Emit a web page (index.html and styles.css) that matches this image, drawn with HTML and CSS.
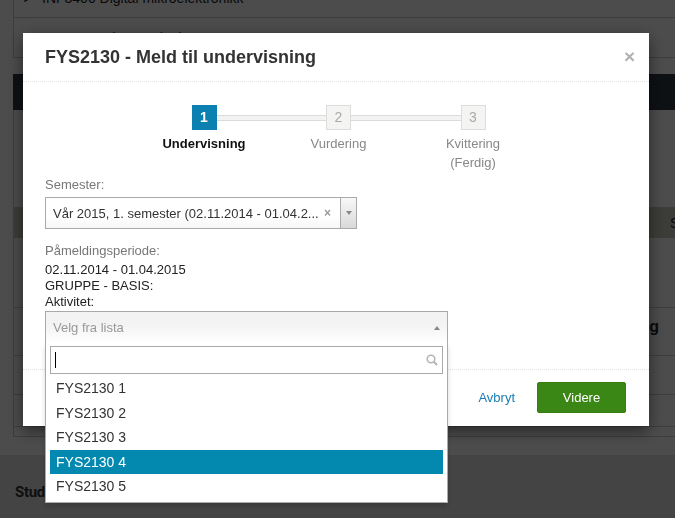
FILE: index.html
```html
<!DOCTYPE html>
<html lang="no">

<head>
    <meta charset="UTF-8">
    <meta name="viewport" content="width=device-width, initial-scale=1.0">
    <title>FYS2130 - Meld til undervisning</title>
    <link rel="stylesheet" href="styles.css">
</head>

<body>
    <div class="page">
        <div class="courses">
            <div class="course-row">
                <svg class="pencil" width="10" height="10" viewBox="0 0 10 10"><path d="M1 9 L2 6 L7 1 L9 3 L4 8 Z" fill="#333"/></svg>
                <span>INF3400 Digital mikroelektronikk</span>
            </div>
            <div class="course-row">
                <svg class="pencil" width="10" height="10" viewBox="0 0 10 10"><path d="M1 9 L2 6 L7 1 L9 3 L4 8 Z" fill="#333"/></svg>
                <span>MAT1120 Lineær algebra</span>
            </div>
        </div>
        <div class="navbar"></div>
        <div class="panel">
            <div class="tbl-head"><span>Emne</span><span>Semester</span></div>
            <div class="tbl-row row-a"></div>
            <div class="tbl-row row-b">Undervisning og</div>
            <div class="tbl-row row-c"></div>
            <div class="tbl-row row-d"></div>
        </div>
        <div class="footer"><span class="footer-title">Studentweb</span></div>
    </div>

    <div class="backdrop"></div>

    <div class="modal">
        <div class="modal-header">
            <h3>FYS2130 - Meld til undervisning</h3>
            <span class="close">×</span>
        </div>
        <div class="modal-body">
            <div class="steps">
                <div class="step active">
                    <span class="step-num">1</span>
                    <span class="step-label">Undervisning</span>
                </div>
                <div class="step">
                    <span class="step-num">2</span>
                    <span class="step-label">Vurdering</span>
                </div>
                <div class="step">
                    <span class="step-num">3</span>
                    <span class="step-label">Kvittering<br>(Ferdig)</span>
                </div>
            </div>

            <div class="field-label">Semester:</div>
            <div class="select">
                <span class="select-text">Vår 2015, 1. semester (02.11.2014 - 01.04.2...</span>
                <span class="select-clear">×</span>
                <span class="select-arrow"><i class="tri-down"></i></span>
            </div>

            <div class="field-label period">Påmeldingsperiode:</div>
            <div class="info">
                02.11.2014 - 01.04.2015<br>
                GRUPPE - BASIS:<br>
                Aktivitet:
            </div>

            <div class="select2">
                <span class="placeholder">Velg fra lista</span>
                <i class="tri-up"></i>
                <div class="dropdown">
                    <div class="search">
                        <span class="caret"></span>
                        <svg class="search-icon" width="12" height="12" viewBox="0 0 12 12"><circle cx="5" cy="5" r="3.8" fill="none" stroke="#b5b5b5" stroke-width="1.6"/><path d="M7.8 7.8 L11 11" stroke="#b5b5b5" stroke-width="2"/></svg>
                    </div>
                    <ul class="results">
                        <li>FYS2130 1</li>
                        <li>FYS2130 2</li>
                        <li>FYS2130 3</li>
                        <li class="highlighted">FYS2130 4</li>
                        <li>FYS2130 5</li>
                    </ul>
                </div>
            </div>
        </div>
        <div class="modal-footer">
            <a class="cancel">Avbryt</a>
            <button class="btn-next">Videre</button>
        </div>
    </div>
</body>

</html>
```

FILE: styles.css
```css
* {
    box-sizing: border-box;
}

html,
body {
    margin: 0;
}

body {
    width: 675px;
    height: 518px;
    overflow: hidden;
    background: #fff;
    font-family: "Liberation Sans", Arial, sans-serif;
    color: #333;
}

/* page behind the dialog */
.page {
    width: 675px;
    overflow: hidden;
}

.courses {
    margin: -22px 0 0 13px;
    border-left: 1px solid #ccc;
    border-bottom: 1px solid #ccc;
}

.course-row {
    height: 40px;
    display: flex;
    align-items: center;
    gap: 9px;
    padding-left: 9px;
    font-size: 14px;
    color: #222;
    border-bottom: 1px solid #ccc;
}

.course-row:last-child {
    height: 39px;
    border-bottom: 0;
}

.navbar {
    margin: 16px 0 0 13px;
    height: 36px;
    background: #303a43;
}

.panel {
    margin-left: 13px;
    padding: 97px 0 9px;
    border-left: 1px solid #ccc;
    border-bottom: 1px solid #ccc;
}

.tbl-head {
    height: 31px;
    display: grid;
    grid-template-columns: 1fr 25px;
    align-items: center;
    background: #c8c8bb;
    font-size: 14px;
    color: #222;
    white-space: nowrap;
    overflow: hidden;
}

.tbl-head span {
    padding-left: 20px;
}

.tbl-row {
    border-bottom: 1px solid #ccc;
}

.row-a {
    height: 70px;
}

.row-b {
    height: 48px;
    padding: 9px 16px 0 0;
    text-align: right;
    line-height: 20px;
    font-size: 16px;
    font-weight: bold;
    color: #222;
}

.row-c {
    height: 39px;
}

.row-d {
    height: 32px;
}

.footer {
    margin-top: 18px;
    height: 63px;
    padding: 27px 0 0 15px;
    background: #e4e4e4;
}

.footer-title {
    font-family: Roboto, sans-serif;
    font-weight: bold;
    font-size: 15px;
    line-height: 20px;
    letter-spacing: -0.3px;
    color: #333;
}

.backdrop {
    position: fixed;
    inset: 0;
    background: rgba(0, 0, 0, 0.7);
}

/* dialog */
.modal {
    position: fixed;
    top: 33px;
    left: 23px;
    width: 626px;
    background: #fff;
    box-shadow: 0 5px 15px rgba(0, 0, 0, 0.5);
    font-size: 13px;
    color: #333;
}

.modal-header {
    height: 49px;
    padding: 0 14px 0 22px;
    display: flex;
    align-items: center;
    justify-content: space-between;
    border-bottom: 1px dotted #e2e2e2;
}

.modal-header h3 {
    margin: 0;
    font-size: 18px;
    font-weight: bold;
    color: #333;
}

.close {
    font-size: 19px;
    font-weight: bold;
    color: #b0b0b0;
}

.modal-body {
    padding: 23px 22px 25px;
}

.steps {
    display: flex;
    justify-content: center;
    padding-left: 5px;
}

.step {
    position: relative;
    width: 134.5px;
    display: flex;
    flex-direction: column;
    align-items: center;
}

.step:not(:last-child)::after {
    content: "";
    position: absolute;
    top: 10px;
    left: calc(50% + 12.5px);
    width: calc(100% - 25px);
    height: 4px;
    background: #f3f3f3;
    border-top: 1px solid #dcdcdc;
    border-bottom: 1px solid #dcdcdc;
}

.step-num {
    width: 25px;
    height: 25px;
    border: 1px solid #dcdcdc;
    background: #f4f4f2;
    color: #aaa;
    font-size: 14px;
    line-height: 23px;
    text-align: center;
}

.step.active .step-num {
    background: #0b80b1;
    border-color: #0b80b1;
    color: #fff;
    font-weight: bold;
}

.step-label {
    margin-top: 4px;
    line-height: 19px;
    color: #888;
    text-align: center;
}

.step.active .step-label {
    color: #111;
    font-weight: bold;
}

.field-label {
    margin-top: 4px;
    line-height: 18px;
    color: #777;
}

.field-label.period {
    margin-top: 13px;
}

.select {
    margin-top: 3px;
    width: 312px;
    height: 32px;
    display: flex;
    align-items: center;
    border: 1px solid #aaa;
    background: linear-gradient(to top, #f6f6f6, #fff 40%);
}

.select-text {
    flex: 1;
    min-width: 0;
    padding-left: 7px;
    white-space: nowrap;
    overflow: hidden;
    color: #333;
}

.select-clear {
    margin-right: 9px;
    font-size: 12px;
    font-weight: bold;
    color: #999;
}

.select-arrow {
    width: 16px;
    height: 100%;
    display: flex;
    align-items: center;
    justify-content: center;
    border-left: 1px solid #aaa;
    background: linear-gradient(#f8f8f8, #d9d9d9);
}

.tri-down {
    border-left: 3px solid transparent;
    border-right: 3px solid transparent;
    border-top: 4px solid #888;
}

.info {
    margin-top: 2px;
    line-height: 16px;
    color: #222;
}

.select2 {
    position: relative;
    margin-top: 1px;
    width: 403px;
    height: 33px;
    display: flex;
    align-items: center;
    justify-content: space-between;
    padding: 0 7px;
    border: 1px solid #aaa;
    border-bottom: 1px dotted #aaa;
    background: linear-gradient(to top, #fff 0%, #f3f3f3 60%);
}

.placeholder {
    color: #999;
}

.tri-up {
    border-left: 3px solid transparent;
    border-right: 3px solid transparent;
    border-bottom: 4px solid #888;
}

.dropdown {
    position: absolute;
    top: 100%;
    left: -1px;
    right: -1px;
    z-index: 10;
    padding: 3px 4px 3px;
    background: #fff;
    border: 1px solid #aaa;
    border-top: 0;
    box-shadow: 0 4px 5px rgba(0, 0, 0, 0.15);
}

.search {
    height: 28px;
    display: flex;
    align-items: center;
    justify-content: space-between;
    padding: 0 4px;
    border: 1px solid #aaa;
}

.caret {
    width: 1px;
    height: 16px;
    background: #000;
}

.results {
    list-style: none;
    margin: 2px 0 0;
    padding: 0;
}

.results li {
    padding: 0 6px;
    line-height: 24.5px;
    font-size: 14px;
    color: #333;
}

.results li.highlighted {
    background: #0389af;
    color: #fff;
}

.modal-footer {
    display: flex;
    justify-content: flex-end;
    align-items: center;
    gap: 22px;
    padding: 12px 23px 13px;
    border-top: 1px dotted #e2e2e2;
}

.cancel {
    color: #1b7db8;
}

.btn-next {
    width: 89px;
    height: 31px;
    border: 1px solid #367d12;
    border-radius: 2px;
    background: #3b8715;
    color: #fff;
    font-family: "Liberation Sans", Arial, sans-serif;
    font-size: 13px;
}
```
